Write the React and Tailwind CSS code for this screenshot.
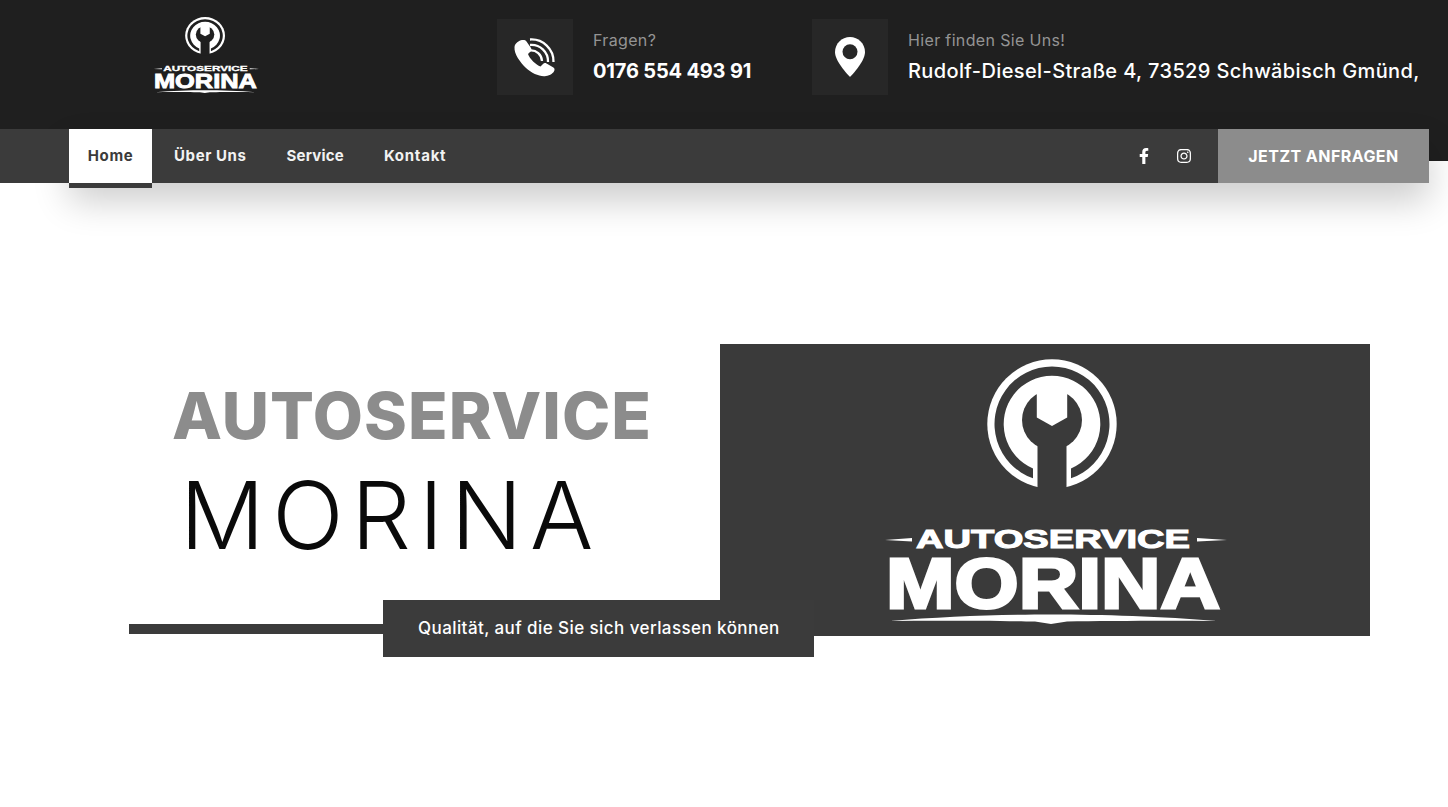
import React from "react";
import { FaFacebookF, FaInstagram } from "react-icons/fa";

function Logo({ bg, className }) {
  return (
    <svg viewBox="0 0 344 265" preserveAspectRatio="none" className={className}>
      <g transform="translate(169 65)">
        <circle cx="0" cy="0" r="64.7" fill="#fff" />
        <path d="M-19 54.3 A57.5 57.5 0 1 1 19 54.3 L19 44.4 A48.3 48.3 0 1 0 -19 44.4 Z" fill={bg} />
        <circle cx="0" cy="-4" r="30" fill={bg} />
        <rect x="-14.5" y="10" width="29" height="60" fill={bg} />
        <path d="M-15.2 -36 L15.2 -36 L15.2 -6.5 L0 2 L-15.2 -6.5 Z" fill="#fff" />
      </g>
      <path d="M2 181 L29 179 L29 182.5 Z M314 179 L344 181 L314 182.5 Z" fill="#fff" />
      <text x="33" y="189" textLength="274" lengthAdjust="spacingAndGlyphs" fontSize="25" fontWeight="700" fill="#fff" stroke="#fff" strokeWidth="1" className="font-['Liberation_Sans']">AUTOSERVICE</text>
      <text x="3" y="248.5" textLength="334" lengthAdjust="spacingAndGlyphs" fontSize="70" fontWeight="700" fill="#fff" stroke="#fff" strokeWidth="3" className="font-['Liberation_Sans']">MORINA</text>
      <path d="M7 262 C60 257.5 120 255.5 169 255.5 C218 255.5 280 257.5 334 262 C280 261.5 220 262 184 262.5 L168 265 L152 262.5 C120 262 60 261.5 7 262 Z" fill="#fff" />
    </svg>
  );
}

function PhoneIcon() {
  return (
    <svg viewBox="0 -3 50 50" className="w-[50px] h-[50px]">
      <path d="M12 5 C9 5.5 5 8 4.5 12 C4 19 10 27 16 33 C22 38.5 30 42 36 41 C40 40.5 44 38 44.5 35 C44.7 33.5 44 33 43 32.3 L36.5 28.5 C35 27.7 34 28 33 29 L30.5 31.5 C26 30 19.5 23.5 18 19 L20.5 16.5 C21.5 15.5 21.7 14.5 21 13 L16.5 6.5 C15.5 5 14 4.8 12 5 Z" fill="#fff" />
      <g fill="none" stroke="#fff" strokeWidth="2.3">
        <path d="M20 4.5 A22 22 0 0 1 43.5 27" />
        <path d="M20 10 A16.5 16.5 0 0 1 38 27" />
        <path d="M20 15.5 A11 11 0 0 1 32 26" />
      </g>
    </svg>
  );
}

function PinIcon() {
  return (
    <svg viewBox="0 0 30 40" className="w-[30px] h-[40px]">
      <path d="M15 0 C6.7 0 0 6.7 0 15 C0 25 15 40 15 40 C15 40 30 25 30 15 C30 6.7 23.3 0 15 0 Z" fill="#fff" />
      <circle cx="15" cy="14.7" r="7.5" fill="#272727" />
    </svg>
  );
}

export default function App() {
  return (
    <div className="min-h-[807px] bg-white overflow-hidden font-['Inter',sans-serif]">
      <header className="h-[161px] bg-[#1f1f1f]">
        <div className="h-[129px] flex items-start pl-[153px]">
          <Logo bg="#1f1f1f" className="mt-[17px] w-[106px] h-[76px] shrink-0" />
          <div className="ml-[238px] mt-[19px] flex">
            <div className="w-[76px] h-[76px] bg-[#272727] flex items-center justify-center shrink-0">
              <PhoneIcon />
            </div>
            <div className="ml-5 pt-[11px] w-[219px] shrink-0">
              <p className="text-[16px] leading-[20px] tracking-[0.35px] text-[#949494]">Fragen?</p>
              <p className="mt-[9px] text-[20px] leading-[24px] font-bold tracking-[-0.17px] text-white">0176 554 493 91</p>
            </div>
            <div className="w-[76px] h-[76px] bg-[#272727] flex items-center justify-center shrink-0">
              <PinIcon />
            </div>
            <div className="ml-5 pt-[11px] shrink-0">
              <p className="text-[16px] leading-[20px] tracking-[0.35px] text-[#949494]">Hier finden Sie Uns!</p>
              <p className="mt-[9px] text-[20px] leading-[24px] font-medium tracking-[0.38px] text-white whitespace-nowrap">Rudolf-Diesel-Straße 4, 73529 Schwäbisch Gmünd,</p>
            </div>
          </div>
        </div>
      </header>

      <div className="relative -mt-[32px] w-[1429px] h-[54px] flex">
        <div className="relative z-10 w-[69px] bg-[#3b3b3b] shrink-0" />
        <nav className="flex-1 bg-[#3b3b3b] flex items-stretch shadow-[0_18px_36px_rgba(0,0,0,0.2)]">
          <a className="relative w-[83px] bg-white text-[#3b3b3b] text-[15px] font-bold tracking-[0.6px] flex items-center justify-center">
            Home
            <span className="absolute left-0 right-0 -bottom-[5px] h-[5px] bg-[#3b3b3b]" />
          </a>
          <div className="ml-[22px] flex items-center gap-[40px] text-[15px] font-bold text-[#f2f2f2]">
            <a className="tracking-[0.6px]">Über Uns</a>
            <a className="tracking-[0.2px]">Service</a>
            <a className="tracking-[0.75px]">Kontakt</a>
          </div>
          <div className="ml-auto flex items-center">
            <FaFacebookF className="text-white w-[14px] h-[16px]" />
            <FaInstagram className="ml-[25px] mr-[26px] text-white w-[16px] h-[16px]" />
            <a className="w-[211px] h-full bg-[#8c8c8c] text-white text-[16px] font-bold tracking-[0.45px] flex items-center justify-center">JETZT ANFRAGEN</a>
          </div>
        </nav>
      </div>

      <main className="pt-[161px]">
        <div className="flex pl-[129px]">
          <div className="w-[591px] h-[292px] shrink-0 pt-[32px]">
            <h1 className="pl-[43px] text-[65px] leading-[80px] font-extrabold tracking-[1px] text-[#8c8c8c] whitespace-nowrap">AUTOSERVICE</h1>
            <h2 className="pl-[51px] mt-[9px] text-[94px] leading-[100px] font-light tracking-[7.7px] text-[#0a0a0a] whitespace-nowrap">MORINA</h2>
          </div>
          <div className="w-[650px] h-[292px] shrink-0 bg-[#3a3a3a] flex pl-[163px] pt-[15px]">
            <Logo bg="#3a3a3a" className="w-[344px] h-[265px]" />
          </div>
        </div>
        <div className="relative -mt-[36px] flex items-center pl-[129px]">
          <div className="w-[254px] h-[10px] bg-[#3b3b3b]" />
          <div className="w-[431px] h-[57px] bg-[#3b3b3b] pl-[35px] flex items-center text-[17px] font-medium tracking-[0.42px] text-white whitespace-nowrap">
            Qualität, auf die Sie sich verlassen können
          </div>
        </div>
      </main>
    </div>
  );
}
